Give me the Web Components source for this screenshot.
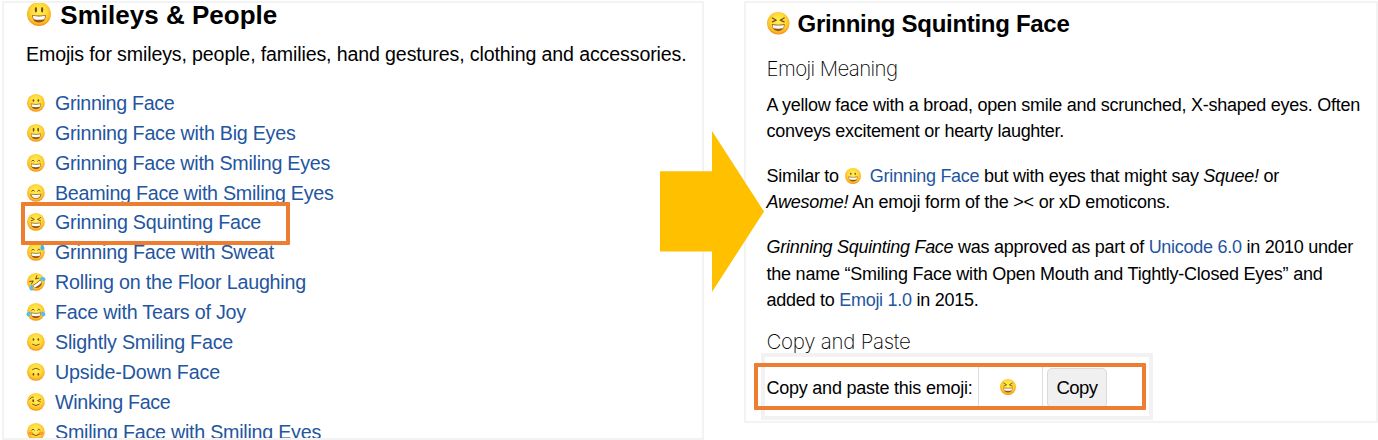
<!DOCTYPE html>
<html lang="en"><head><meta charset="utf-8"><title>Smileys &amp; People</title>
<style>
body{margin:0;width:1378px;height:440px;overflow:hidden;background:#fff;color:#000;font-family:"Liberation Sans",Arial,sans-serif;position:relative}
</style></head><body>
<emoji-guide></emoji-guide>
<script>
const FACES={
 open:'<path class="m" d="M8.500 21.500Q20 23.500 31.500 21.500Q31 34 20 34Q9 34 8.500 21.500Z"/><path fill="#fff" d="M10 23Q20 25 30 23Q30 28 28.500 28.800Q20 30.500 11.500 28.800Q10 28 10 23Z"/>',
 dots:'<ellipse class="e" cx="14.500" cy="14.500" rx="1.900" ry="2.900"/><ellipse class="e" cx="25.500" cy="14.500" rx="1.900" ry="2.900"/>',
 tall:'<ellipse class="e" cx="14.800" cy="12.800" rx="1.900" ry="4.500"/><ellipse class="e" cx="25.200" cy="12.800" rx="1.900" ry="4.500"/>',
 arcs:'<path class="l" d="M10.500 16Q13.500 10.500 16.500 16M23.500 16Q26.500 10.500 29.500 16"/>',
 squint:'<path class="l" d="M9.500 10.500L16.500 14.500L9.500 17.500M30.500 10.500L23.500 14.500L30.500 17.500"/>',
 teeth:'<path class="m" d="M7.500 22Q20 24 32.500 22Q31.500 33.500 20 33.500Q8.500 33.500 7.500 22Z"/><path d="M9.500 23.500Q20 25.500 30.500 23.500Q28.500 32 20 32Q11.500 32 9.500 23.500Z" fill="#fff"/><path d="M10.500 27.500Q20 29.500 29.500 27.500" stroke="#c9b795" stroke-width=".8" fill="none"/>',
 smile:'<path class="l" d="M12.500 25.500Q20 31.500 27.500 25.500"/>',
 sweat:'<path d="M34.500 1Q40.500 10 39 14Q34.500 18.500 30.500 14Q29 10 34.500 1Z" fill="#43b5ee"/>',
 drops:'<path d="M9 19Q0 19-1.500 25Q-1.500 31 4.500 30Q9 27 9 19ZM31 19Q40 19 41.500 25Q41.500 31 35.500 30Q31 27 31 19Z" fill="#55bdf0"/>',
 wink:'<ellipse class="e" cx="14" cy="17.500" rx="2.100" ry="3.200"/><path class="l" d="M6.500 13.500Q9 8.500 14 9M30.500 14L23.500 17L30 19.500"/>',
 blush:'<ellipse cx="8.500" cy="23" rx="5.500" ry="4" fill="#f36f36" opacity=".55"/><ellipse cx="31.500" cy="23" rx="5.500" ry="4" fill="#f36f36" opacity=".55"/>'
};
const KINDS={grin:['dots','open'],big:['tall','open'],smiling:['arcs','open'],beam:['arcs','teeth'],squint:['squint','open'],
 sweat:['arcs','open','sweat'],rofl:['squint','open','drops'],joy:['arcs','open','drops'],slight:['dots','smile'],upside:['dots','smile'],wink:['wink','smile'],blush:['blush','arcs','smile']};
const TURN={rofl:'rotate(-38 20 20)',upside:'rotate(180 20 20)'};
class EmojiFace extends HTMLElement{
 connectedCallback(){
  const k=this.getAttribute('kind');
  this.attachShadow({mode:'open'}).innerHTML=`<style>:host{display:inline-block;width:18px;height:18px;flex:none}svg{display:block;width:100%;height:100%;overflow:visible}
  .m{fill:#93571a}.e{fill:#7a470f}.l{fill:none;stroke:#7a470f;stroke-width:2.1;stroke-linecap:round;stroke-linejoin:round}</style>
  <svg viewBox="0 0 40 40"><defs><radialGradient id="g" cx=".5" cy=".4" r=".62"><stop offset="0" stop-color="#fff05a"/><stop offset=".5" stop-color="#ffdc3c"/><stop offset=".8" stop-color="#fcb924"/><stop offset="1" stop-color="#ed8414"/></radialGradient></defs>
  <circle cx="20" cy="20" r="20" fill="url(#g)"/><g transform="${TURN[k]||''}">${KINDS[k].map(n=>FACES[n]).join('')}</g></svg>`;
 }}
/* One line of text, tracked so that its text spans the given measure. */
class FitLine extends HTMLElement{
 connectedCallback(){
  this.attachShadow({mode:'open'}).innerHTML='<style>:host{display:block;white-space:nowrap}span{display:inline-block}</style><span><slot></slot></span>';
  const s=this.shadowRoot.querySelector('span'),w=+this.getAttribute('w');
  const n=this.textContent.length;
  this.style.letterSpacing=(w-s.getBoundingClientRect().width)/n+'px';
 }}
class GuidePanel extends HTMLElement{
 connectedCallback(){this.attachShadow({mode:'open'}).innerHTML='<style>:host{display:block;box-sizing:border-box;border:2px solid #f3f3f3;overflow:hidden}</style><slot></slot>';}}
class EmojiRow extends HTMLElement{
 connectedCallback(){this.attachShadow({mode:'open'}).innerHTML=`<style>:host{display:flex;align-items:center;height:29.92px;font-size:19.7px;line-height:29.92px;color:#2355a0}emoji-face{width:17.800px;height:17.800px;margin:0 11px 2px .500px}fit-line{margin-left:-.3px}</style>
 <emoji-face kind="${this.getAttribute('kind')}"></emoji-face><fit-line w="${this.getAttribute('w')}">${this.getAttribute('name')}</fit-line>`;}}
class HighlightBox extends HTMLElement{
 connectedCallback(){this.attachShadow({mode:'open'}).innerHTML='<style>:host{display:block;position:absolute;box-sizing:border-box;border:4px solid #ed7d31;border-radius:1px}</style>';}}
class FlowArrow extends HTMLElement{
 connectedCallback(){this.attachShadow({mode:'open'}).innerHTML='<style>:host{display:block;position:absolute;left:660px;top:131px;width:104px;height:161px}svg{display:block}</style><svg width="104" height="161"><path d="M0 40.300H52V0L104 80.400L52 161V120.600H0Z" fill="#ffc000"/></svg>';}}
class CopyField extends HTMLElement{
 connectedCallback(){this.attachShadow({mode:'open'}).innerHTML=`<style>:host{display:flex;box-sizing:border-box;width:392px;height:67px;border:4px solid #f2f2f2;padding:10px 0 0 1.500px;margin-left:-5.500px;font-size:18px;line-height:42.500px;background:#fff}
 .label{width:211px}.cell{width:63px;height:40px;border:solid #ddd;border-width:0 1px;display:flex;align-items:center;justify-content:center;margin-right:4px}
 .cell emoji-face{width:16px;height:16px;margin:1px 5px 0 0}
 button{box-sizing:border-box;width:60px;height:40px;margin:1px 0 0;padding:0 0 0 9px;border:1px solid #dadada;border-radius:5px;background:#f0f0f0;font:inherit;font-size:18.500px;line-height:38px;color:#000;text-align:left}</style>
 <fit-line class="label" w="206">Copy and paste this emoji:</fit-line><div class="cell"><emoji-face kind="squint"></emoji-face></div><button><fit-line w="41">Copy</fit-line></button>`;}}
const ROWS=[['grin','Grinning Face',119.5],['big','Grinning Face with Big Eyes',240.5],['smiling','Grinning Face with Smiling Eyes',275],['beam','Beaming Face with Smiling Eyes',278.5],['squint','Grinning Squinting Face',206],['sweat','Grinning Face with Sweat',219],['rofl','Rolling on the Floor Laughing',251],['joy','Face with Tears of Joy',191],['slight','Slightly Smiling Face',178],['upside','Upside-Down Face',165],['wink','Winking Face',115.5],['blush','Smiling Face with Smiling Eyes',266]];
class EmojiGuide extends HTMLElement{
 connectedCallback(){this.attachShadow({mode:'open'}).innerHTML=`<style>
 :host{display:flex;box-sizing:border-box;height:440px;padding:1px 0 0 2px;gap:40px;align-items:flex-start}
 .list{width:702px;height:438.500px;padding-left:22px}.detail{width:634px;height:422px;padding-left:20.500px}
 h1,h2,p{margin:0}h1{display:flex;align-items:center;font-size:26px;line-height:24px;height:24px}
 h1 emoji-face{width:24px;height:24px;margin:-2px 9.500px 0 .800px}
 .desc{font-size:19.600px;line-height:29px;margin:13px 0 19.800px}
 .detail h1{font-size:24px;height:41px;line-height:41px}.detail h1 emoji-face{width:22.500px;height:22.500px;margin:-1px 8px 0 .500px}
 h2{font:200 20.500px/30px Inter,sans-serif;height:30px;margin:10.200px 0 7.500px}
 h2.second{margin:14.200px 0 0;height:24.500px;line-height:28px}
 p{font-size:18px;line-height:26.650px;margin-bottom:17.800px}p.last{margin-bottom:0}
 p emoji-face{width:16px;height:16px;margin:0 4.500px 0 1px;vertical-align:-2px}a{color:#2355a0;text-decoration:none}
 </style>
 <guide-panel class="list"><h1><emoji-face kind="big"></emoji-face><fit-line w="217">Smileys &amp; People</fit-line></h1>
 <p class="desc"><fit-line w="660.500">Emojis for smileys, people, families, hand gestures, clothing and accessories.</fit-line></p>
 ${ROWS.map(([k,n,w])=>`<emoji-row kind="${k}" name="${n}" w="${w}"></emoji-row>`).join('')}</guide-panel>
 <guide-panel class="detail"><h1><emoji-face kind="squint"></emoji-face><fit-line w="272">Grinning Squinting Face</fit-line></h1>
 <h2><fit-line w="131">Emoji Meaning</fit-line></h2>
 <p><fit-line w="593.500">A yellow face with a broad, open smile and scrunched, X-shaped eyes. Often</fit-line><fit-line w="297.500">conveys excitement or hearty laughter.</fit-line></p>
 <p><fit-line w="491.500">Similar to <emoji-face kind="grin"></emoji-face> <a>Grinning Face</a> but with eyes that might say <em>Squee!</em> or</fit-line><fit-line w="403.500"><em>Awesome!</em> An emoji form of the &gt;&lt; or xD emoticons.</fit-line></p>
 <p class="last"><fit-line w="586.500"><em>Grinning Squinting Face</em> was approved as part of <a>Unicode 6.0</a> in 2010 under</fit-line><fit-line w="556">the name “Smiling Face with Open Mouth and Tightly-Closed Eyes” and</fit-line><fit-line w="212">added to <a>Emoji 1.0</a> in 2015.</fit-line></p>
 <h2 class="second"><fit-line w="144">Copy and Paste</fit-line></h2>
 <copy-field></copy-field></guide-panel>
 <highlight-box style="left:21px;top:202px;width:269px;height:43px"></highlight-box>
 <highlight-box style="left:754px;top:363px;width:392px;height:47px"></highlight-box>
 <flow-arrow></flow-arrow>`;}}
customElements.define('emoji-face',EmojiFace);
customElements.define('fit-line',FitLine);
customElements.define('guide-panel',GuidePanel);
customElements.define('emoji-row',EmojiRow);
customElements.define('highlight-box',HighlightBox);
customElements.define('flow-arrow',FlowArrow);
customElements.define('copy-field',CopyField);
customElements.define('emoji-guide',EmojiGuide);
</script></body></html>
